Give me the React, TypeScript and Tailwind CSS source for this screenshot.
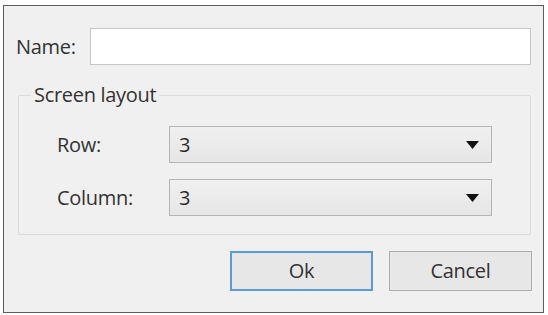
import React from 'react';

const Arrow = () => (
    <svg width="13" height="8" viewBox="0 0 13 8" className="shrink-0">
        <path d="M0 0 H13 L6.5 8 Z" fill="#111" />
    </svg>
);

const Select = ({ value }: { value: string }) => (
    <div className="w-[323px] h-[37px] flex items-center justify-between pl-[9px] pr-[12px] border border-[#b5b5b5] bg-gradient-to-b from-[#f0f0f0] to-[#e6e6e6] text-[#2a2a2a]">
        <span>{value}</span>
        <Arrow />
    </div>
);

const App = () => {
    return (
        <div className="w-[548px] h-[315px] bg-white pt-[5px] pl-[3px] font-['Open_Sans','Noto_Sans',sans-serif] text-[20px] tracking-[-0.3px] text-[#333]">
            <div className="w-[541px] h-[308px] border-[1.5px] border-[#5c5c5c] bg-[#f0f0f0] flex flex-col">
                {/* name row */}
                <div className="flex items-center mt-[22px] ml-[12px]">
                    <label className="w-[74px]">Name:</label>
                    <div className="w-[441px] h-[37px] bg-white border border-[#c6c6c6]" />
                </div>

                {/* group box */}
                <div className="relative ml-[14px] mt-[30px] w-[513px] h-[140px] border border-[#dcdcdc] rounded-[2px]">
                    <span className="absolute left-[12px] -top-[16px] px-[3px] bg-[#f0f0f0]">Screen layout</span>
                    <div className="flex flex-col gap-[16px] mt-[30px] ml-[38px]">
                        <div className="flex items-center">
                            <label className="w-[112px]">Row:</label>
                            <Select value="3" />
                        </div>
                        <div className="flex items-center">
                            <label className="w-[112px]">Column:</label>
                            <Select value="3" />
                        </div>
                    </div>
                </div>

                {/* buttons */}
                <div className="flex justify-end gap-[16px] mt-[16px] mr-[11px]">
                    <button className="w-[143px] h-[40px] border-2 border-[#5a9bd5] bg-[#e7e7e7] text-[#333]">Ok</button>
                    <button className="w-[143px] h-[40px] border border-[#adadad] bg-[#e7e7e7] text-[#333]">Cancel</button>
                </div>
            </div>
        </div>
    );
};

export default App;
